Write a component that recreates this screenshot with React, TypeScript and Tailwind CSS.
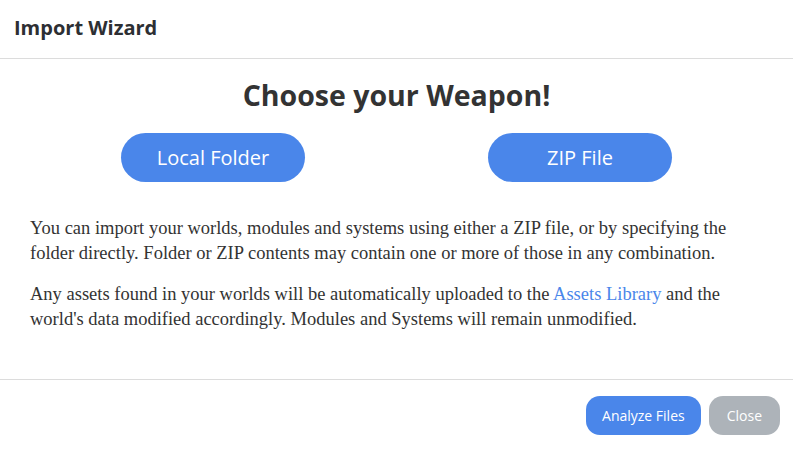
export default function App() {
  return (
    <div className="w-[793px] h-[450px] bg-white text-[#333] flex flex-col">
      <div className="h-[59px] border-b border-[#dcdcdc] flex items-center px-[14px]">
        <h2 className="text-[20px] font-bold font-['Open_Sans',sans-serif] text-[#2d2f33] -mt-[3px]">Import Wizard</h2>
      </div>
      <div className="flex-1 flex flex-col px-[30px]">
        <h1 className="mt-[16px] text-center text-[28.5px] font-bold leading-[40px] font-['Open_Sans',sans-serif] text-[#333]">
          Choose your Weapon!
        </h1>
        <div className="mt-[18px] flex justify-center gap-[183px]">
          <button className="w-[184px] h-[49px] rounded-full bg-[#4a86ea] text-white text-[20px] font-['Open_Sans',sans-serif]">
            Local Folder
          </button>
          <button className="w-[184px] h-[49px] rounded-full bg-[#4a86ea] text-white text-[20px] font-['Open_Sans',sans-serif]">
            ZIP File
          </button>
        </div>
        <div className="mt-[34px] max-w-[712px] font-['Liberation_Serif','Times_New_Roman',serif] text-[18.5px] leading-[25px] text-[#333] flex flex-col gap-[16px]">
          <p>
            You can import your worlds, modules and systems using either a ZIP file, or by specifying the folder directly. Folder or ZIP contents may contain one or more of those in any combination.
          </p>
          <p>
            Any assets found in your worlds will be automatically uploaded to the{" "}
            <span className="text-[#4a86ea]">Assets Library</span> and the world's data modified accordingly. Modules and Systems will remain unmodified.
          </p>
        </div>
      </div>
      <div className="h-[71px] border-t border-[#dcdcdc] flex items-start justify-end gap-[8px] pt-[16px] pr-[13px] font-['Open_Sans',sans-serif] text-[14px] text-white">
        <button className="h-[39px] px-[16px] rounded-[14px] bg-[#4a86ea]">Analyze Files</button>
        <button className="h-[39px] px-[18px] rounded-[14px] bg-[#adb3b9]">Close</button>
      </div>
    </div>
  );
}
